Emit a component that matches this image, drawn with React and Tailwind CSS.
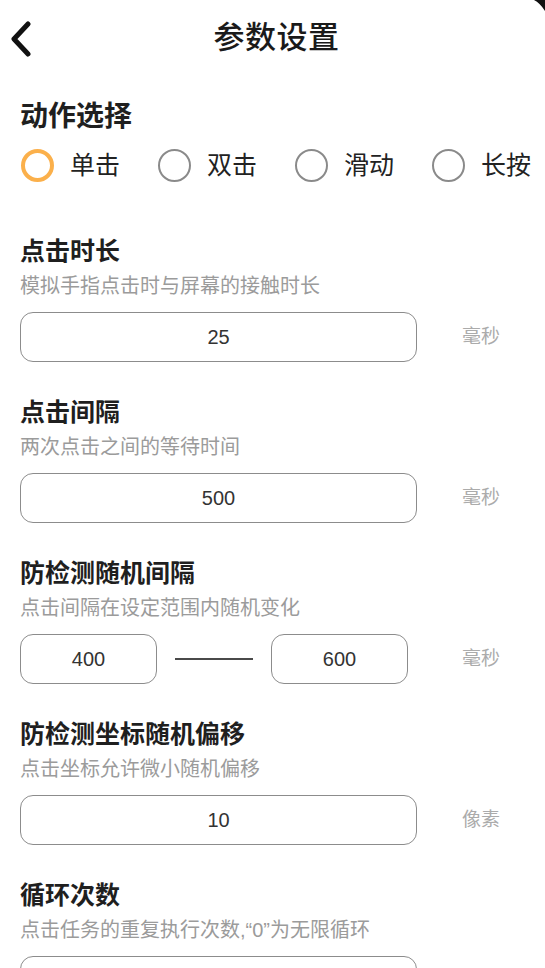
import React, { useState } from 'react'

const FONT = "font-['Liberation_Sans','Noto_Sans_CJK_SC',sans-serif]"

const actions = ['单击', '双击', '滑动', '长按']

function Radio({ label, checked, onClick }) {
  return (
    <button type="button" onClick={onClick} className="flex items-center gap-[16px]">
      <span
        className={
          checked
            ? 'w-[33px] h-[33px] rounded-full border-[4px] border-[#fbb04b] bg-white'
            : 'w-[33px] h-[33px] rounded-full border-[2.5px] border-[#8a8a8a] bg-white'
        }
      />
      <span className="text-[25px] leading-[36px] text-[#222]">{label}</span>
    </button>
  )
}

function Field({ value, className = 'w-[397px]' }) {
  return (
    <div
      className={`${className} h-[50px] rounded-[13px] border-[1.5px] border-[#8c8c8c] flex items-center justify-center text-[20px] text-[#333]`}
    >
      {value}
    </div>
  )
}

function Section({ title, desc, children }) {
  return (
    <div className="mt-[34px] first:mt-[52px]">
      <h2 className="text-[25px] leading-[32px] font-bold text-[#1f1f1f]">{title}</h2>
      <p className="mt-[5px] text-[20px] leading-[28px] text-[#9b9b9b]">{desc}</p>
      <div className="mt-[12px] flex items-center">{children}</div>
    </div>
  )
}

function Unit({ children, className = 'ml-[45px]' }) {
  return <span className={`${className} text-[19px] text-[#ababab]`}>{children}</span>
}

export default function App() {
  const [action, setAction] = useState(0)

  return (
    <div className={`${FONT} relative h-screen bg-white overflow-hidden`}>
      {/* device corner */}
      <svg className="absolute top-0 right-0" width="14" height="14" viewBox="0 0 14 14">
        <path d="M3 0 L14 0 L14 11 Q9 3 3 0 Z" fill="#111" />
      </svg>

      {/* header */}
      <div className="relative h-[76px] flex items-center justify-center pl-[8px]">
        <button type="button" className="absolute left-[10px] top-[21px]">
          <svg width="22" height="36" viewBox="0 0 22 36" fill="none">
            <path d="M18 3 L4 18 L18 33" stroke="#111" strokeWidth="5" strokeLinecap="round" strokeLinejoin="round" />
          </svg>
        </button>
        <h1 className="text-[31px] font-medium text-[#1a1a1a] tracking-[0.5px]">参数设置</h1>
      </div>

      <div className="pl-[20px]">
        <h2 className="mt-[23px] text-[28px] leading-[36px] font-semibold text-[#1f1f1f]">动作选择</h2>
        <div className="mt-[12px] h-[36px] flex items-center gap-[38px] pl-[1px]">
          {actions.map((a, i) => (
            <Radio key={a} label={a} checked={action === i} onClick={() => setAction(i)} />
          ))}
        </div>

        <div>
          <Section title="点击时长" desc="模拟手指点击时与屏幕的接触时长">
            <Field value="25" />
            <Unit>毫秒</Unit>
          </Section>

          <Section title="点击间隔" desc="两次点击之间的等待时间">
            <Field value="500" />
            <Unit>毫秒</Unit>
          </Section>

          <Section title="防检测随机间隔" desc="点击间隔在设定范围内随机变化">
            <Field value="400" className="w-[137px]" />
            <span className="mx-[18px] w-[78px] h-[2.5px] bg-[#4a4a4a]" />
            <Field value="600" className="w-[137px]" />
            <Unit className="ml-[54px]">毫秒</Unit>
          </Section>

          <Section title="防检测坐标随机偏移" desc="点击坐标允许微小随机偏移">
            <Field value="10" />
            <Unit>像素</Unit>
          </Section>

          <Section title="循环次数" desc="点击任务的重复执行次数,“0”为无限循环">
            <Field value="" />
          </Section>
        </div>
      </div>
    </div>
  )
}
